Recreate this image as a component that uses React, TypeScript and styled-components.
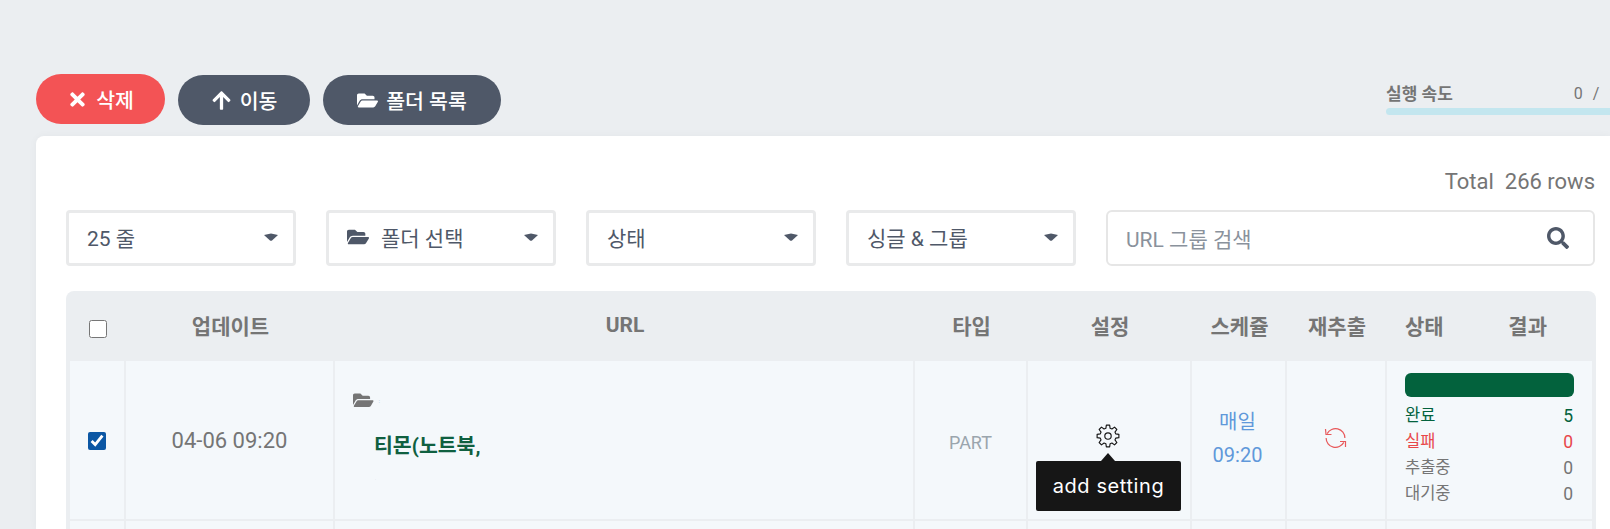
import { createGlobalStyle, styled } from 'styled-components';
import { FaArrowUp, FaFolderOpen, FaSearch, FaTimes } from 'react-icons/fa';

const GlobalStyle = createGlobalStyle`
  html, body {
    margin: 0;
    height: 100%;
    background: #ebeef1;
    overflow: hidden;
  }
  body {
    font-family: Roboto, "Noto Sans CJK KR", sans-serif;
    color: #4f5868;
  }
  * { box-sizing: border-box; }
`;

const Page = styled.div`
  width: 1610px;
  height: 529px;
  padding: 74px 0 0 36px;
  overflow: hidden;
`;

const TopBar = styled.div`
  display: flex;
  align-items: flex-start;
  height: 62px;
`;

const PillButton = styled.button<{ $danger?: boolean; $width: number }>`
  display: flex;
  flex: none;
  align-items: center;
  justify-content: center;
  gap: 8px;
  width: ${(p) => p.$width}px;
  height: 50px;
  margin-top: ${(p) => (p.$danger ? 0 : 1)}px;
  margin-right: 13px;
  border: 0;
  border-radius: 25px;
  background: ${(p) => (p.$danger ? '#f35355' : '#4f5868')};
  color: #fff;
  font: 500 20.5px Roboto, "Noto Sans CJK KR", sans-serif;
  svg { font-size: 21px; }
`;

const Speed = styled.div`
  flex: none;
  margin-left: auto;
  width: 224px;
  padding-top: 7px;
`;

const SpeedRow = styled.div`
  display: flex;
  gap: 121px;
  height: 27px;
  font-size: 16px;
  line-height: 26px;
  color: #757575;
  white-space: pre;
`;

const SpeedLabel = styled.b`
  font-size: 17px;
  font-weight: 700;
`;

const SpeedCount = styled.span`
  letter-spacing: 3px;
`;

const SpeedBar = styled.div`
  height: 7px;
  border-radius: 4px 0 0 4px;
  background: #c3e6ef;
`;

const Card = styled.main`
  height: 393px;
  padding: 31px 14px 0 30px;
  border-radius: 8px 0 0 0;
  background: #fff;
  box-shadow: 0 0 8px rgba(0, 0, 0, 0.04);
`;

const Total = styled.div`
  height: 43px;
  padding-right: 1px;
  text-align: right;
  font-size: 22px;
  line-height: 30px;
  color: #757575;
  white-space: pre;
`;

const Filters = styled.div`
  display: flex;
  gap: 30px;
  height: 81px;
`;

const Select = styled.div`
  display: flex;
  align-items: center;
  width: 230px;
  height: 56px;
  padding: 0 15px 3px 18px;
  border: 3px solid #e9eaeb;
  border-radius: 4px;
  font-size: 21px;
  color: #4f5868;
`;

const SelectIcon = styled(FaFolderOpen)`
  font-size: 22px;
  margin-right: 12px;
`;

const Caret = styled.svg`
  width: 14px;
  height: 8px;
  margin-left: auto;
  fill: #4f5868;
`;

const Search = styled.div`
  display: flex;
  align-items: center;
  justify-content: space-between;
  width: 489px;
  height: 56px;
  padding: 0 24px 0 18px;
  border: 2px solid #e6e6e6;
  border-radius: 6px;
  font-size: 21px;
  color: #8a929c;
  svg { font-size: 22px; color: #4f5868; }
`;

const Table = styled.div`
  width: 1530px;
  background: #ebeef1;
  border-radius: 8px 8px 0 0;
  padding: 0 4px;
`;

const columns = '56px 209px 580px 113px 164px 95px 100px 205px';

const HeadRow = styled.div`
  display: grid;
  grid-template-columns: ${columns};
  height: 70px;
`;

const HeadCell = styled.div`
  display: flex;
  align-items: center;
  justify-content: center;
  padding-bottom: 3px;
  font-size: 21px;
  font-weight: 700;
  color: #757575;
`;

const StatusHead = styled(HeadCell)`
  justify-content: space-between;
  padding-left: 18px;
  padding-right: 45px;
`;

const Row = styled.div`
  display: grid;
  grid-template-columns: ${columns};
  height: 160px;
  padding-bottom: 2px;
`;

const Cell = styled.div`
  display: flex;
  align-items: center;
  justify-content: center;
  position: relative;
  margin-right: 2px;
  background: #f4f8fb;
  font-size: 22px;
  color: #757575;
`;

const LastCell = styled(Cell)`
  display: block;
  margin-right: 0;
  padding: 12px 18px 0;
`;

const Check = styled.input`
  width: 18px;
  height: 18px;
  margin: 2px 0 0;
  accent-color: #0b57a4;
`;

const HeadCheck = styled(Check)`
  margin-top: 8px;
`;

const UrlCell = styled(Cell)`
  display: block;
  padding: 30px 0 0 18px;
`;

const UrlHead = styled.div`
  display: flex;
  align-items: center;
  gap: 5px;
  height: 19px;
  svg { font-size: 20.5px; color: #757575; }
`;

const Speck = styled.span`
  font-size: 6px;
  line-height: 6px;
  color: #8fb4e0;
`;

const UrlTitle = styled.div`
  margin: 21px 0 0 21px;
  font-size: 20.5px;
  line-height: 30px;
  font-weight: 700;
  color: #0f6040;
`;

const UrlNote = styled.div`
  margin: 15px 0 0 22px;
  font-size: 4px;
  line-height: 6px;
  color: #b9c4cf;
`;

const TypeLabel = styled.span`
  padding-top: 4px;
  font-size: 18px;
  color: #9aa5ad;
`;

const GearIcon = styled.svg`
  width: 24px;
  height: 24px;
  margin: 0 2px 8px 0;
  fill: none;
  stroke: #161616;
  stroke-width: 1.15;
  stroke-linejoin: round;
`;

const Tooltip = styled.div`
  position: absolute;
  top: 100px;
  left: 8px;
  width: 145px;
  height: 50px;
  border-radius: 2px;
  background: #161616;
  color: #fff;
  font-family: Inter, sans-serif;
  font-size: 20px;
  letter-spacing: 0.6px;
  line-height: 50px;
  text-align: center;
  &::before {
    content: '';
    position: absolute;
    top: -8px;
    left: 65px;
    border: 7px solid transparent;
    border-top: 0;
    border-bottom: 8px solid #161616;
  }
`;

const Schedule = styled.div`
  padding: 0 2px 3px 0;
  text-align: center;
  font-size: 20px;
  line-height: 33px;
  color: #6098da;
`;

const RefreshIcon = styled.svg`
  width: 23px;
  height: 20px;
  margin: 0 2px 5px 0;
  fill: none;
  stroke: #e8595b;
  stroke-width: 1.2;
`;

const Progress = styled.div`
  height: 24px;
  margin-bottom: 6px;
  border-radius: 6px;
  background: #03623d;
`;

const StatLine = styled.div<{ $color: string }>`
  display: flex;
  justify-content: space-between;
  height: 26px;
  padding-right: 1px;
  font-size: 16.5px;
  line-height: 26px;
  color: ${(p) => p.$color};
`;

const StatValue = styled.span`
  font-size: 17.5px;
`;

const stats = [
  { label: '완료', value: 5, color: '#03623d' },
  { label: '실패', value: 0, color: '#e8474a' },
  { label: '추출중', value: 0, color: '#757575' },
  { label: '대기중', value: 0, color: '#757575' },
];

// 8 teeth, outline only
function gearPath() {
  const pts: string[] = [];
  const step = Math.PI / 4;
  for (let i = 0; i < 8; i++) {
    const a = i * step - Math.PI / 2;
    const corners: [number, number][] = [
      [8, -0.27],
      [11, -0.15],
      [11, 0.15],
      [8, 0.27],
    ];
    corners.forEach(([r, d]) => {
      pts.push(`${(12 + r * Math.cos(a + d)).toFixed(2)} ${(12 + r * Math.sin(a + d)).toFixed(2)}`);
    });
  }
  return `M${pts.join(' L')} Z`;
}

function SelectCaret() {
  return (
    <Caret viewBox="0 0 14 8">
      <path d="M0 2 L7 0.6 L14 2 L8 7.5 Q7 8 6 7.5 Z" />
    </Caret>
  );
}

export default function App() {
  return (
    <Page>
      <GlobalStyle />
      <TopBar>
        <PillButton $danger $width={129}>
          <FaTimes />
          삭제
        </PillButton>
        <PillButton $width={132}>
          <FaArrowUp />
          이동
        </PillButton>
        <PillButton $width={178}>
          <FaFolderOpen />
          폴더 목록
        </PillButton>
        <Speed>
          <SpeedRow>
            <SpeedLabel>실행 속도</SpeedLabel>
            <SpeedCount>0 / 1</SpeedCount>
          </SpeedRow>
          <SpeedBar />
        </Speed>
      </TopBar>
      <Card>
        <Total>Total  266 rows</Total>
        <Filters>
          <Select>
            25 줄
            <SelectCaret />
          </Select>
          <Select>
            <SelectIcon />
            폴더 선택
            <SelectCaret />
          </Select>
          <Select>
            상태
            <SelectCaret />
          </Select>
          <Select>
            싱글 &amp; 그룹
            <SelectCaret />
          </Select>
          <Search>
            URL 그룹 검색
            <FaSearch />
          </Search>
        </Filters>
        <Table>
          <HeadRow>
            <HeadCell>
              <HeadCheck type="checkbox" readOnly />
            </HeadCell>
            <HeadCell>업데이트</HeadCell>
            <HeadCell>URL</HeadCell>
            <HeadCell>타입</HeadCell>
            <HeadCell>설정</HeadCell>
            <HeadCell>스케쥴</HeadCell>
            <HeadCell>재추출</HeadCell>
            <StatusHead>
              <span>상태</span>
              <span>결과</span>
            </StatusHead>
          </HeadRow>
          <Row>
            <Cell>
              <Check type="checkbox" checked readOnly />
            </Cell>
            <Cell>04-06 09:20</Cell>
            <UrlCell>
              <UrlHead>
                <FaFolderOpen />
                <Speck>:</Speck>
              </UrlHead>
              <UrlTitle>티몬(노트북,</UrlTitle>
              <UrlNote>.</UrlNote>
            </UrlCell>
            <Cell>
              <TypeLabel>PART</TypeLabel>
            </Cell>
            <Cell>
              <GearIcon viewBox="0 0 24 24">
                <path d={gearPath()} />
                <circle cx="12" cy="12" r="3.2" />
              </GearIcon>
              <Tooltip>add setting</Tooltip>
            </Cell>
            <Cell>
              <Schedule>
                매일
                <br />
                09:20
              </Schedule>
            </Cell>
            <Cell>
              <RefreshIcon viewBox="0 0 23 20">
                <path d="M3.2 5.6 A9.4 9.4 0 0 1 20.9 10" />
                <path d="M1.5 1 L2 6.5 L7.5 6.5" />
                <path d="M19.8 14.4 A9.4 9.4 0 0 1 2.1 10" />
                <path d="M21.5 19 L21.5 13.5 L16 13.5" />
              </RefreshIcon>
            </Cell>
            <LastCell>
              <Progress />
              {stats.map((s) => (
                <StatLine key={s.label} $color={s.color}>
                  <span>{s.label}</span>
                  <StatValue>{s.value}</StatValue>
                </StatLine>
              ))}
            </LastCell>
          </Row>
          <Row>
            <Cell />
            <Cell />
            <Cell />
            <Cell />
            <Cell />
            <Cell />
            <Cell />
            <LastCell />
          </Row>
        </Table>
      </Card>
    </Page>
  );
}
